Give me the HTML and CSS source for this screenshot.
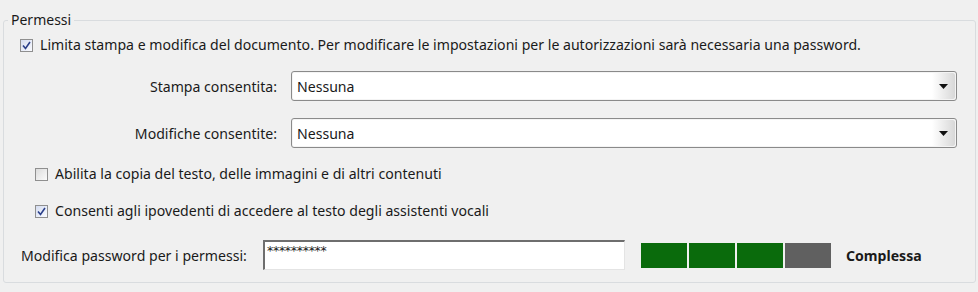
FILE: index.html
```html
<!DOCTYPE html>
<html lang="it">
<head>
<meta charset="utf-8">
<link rel="stylesheet" href="styles.css">
</head>
<body>
<fieldset class="group">
  <legend class="legend">Permessi</legend>
  <label class="check-row main-check">
    <span class="box checked"><svg viewBox="0 0 9 9" width="9" height="9"><path d="M1 4.5 L3.5 7.5 L8 1" fill="none" stroke="#2a3f8a" stroke-width="1.6"/></svg></span>
    <span>Limita stampa e modifica del documento. Per modificare le impostazioni per le autorizzazioni sarà necessaria una password.</span>
  </label>
  <div class="field-row first">
    <span class="field-label">Stampa consentita:</span>
    <div class="select"><span class="select-text">Nessuna</span><span class="arrow"><svg viewBox="0 0 9 5" width="9" height="5"><path d="M0 0 H9 L4.5 5 Z" fill="#111"/></svg></span></div>
  </div>
  <div class="field-row second">
    <span class="field-label">Modifiche consentite:</span>
    <div class="select"><span class="select-text">Nessuna</span><span class="arrow"><svg viewBox="0 0 9 5" width="9" height="5"><path d="M0 0 H9 L4.5 5 Z" fill="#111"/></svg></span></div>
  </div>
  <label class="check-row sub-check c1">
    <span class="box"></span>
    <span>Abilita la copia del testo, delle immagini e di altri contenuti</span>
  </label>
  <label class="check-row sub-check c2">
    <span class="box checked"><svg viewBox="0 0 9 9" width="9" height="9"><path d="M1 4.5 L3.5 7.5 L8 1" fill="none" stroke="#2a3f8a" stroke-width="1.6"/></svg></span>
    <span>Consenti agli ipovedenti di accedere al testo degli assistenti vocali</span>
  </label>
  <div class="pw-row">
    <span class="pw-label">Modifica password per i permessi:</span>
    <div class="pw-input">**********</div>
    <div class="meter">
      <span class="seg on"></span><span class="seg on"></span><span class="seg on"></span><span class="seg off"></span>
    </div>
    <span class="strength">Complessa</span>
  </div>
</fieldset>
</body>
</html>
```
FILE: styles.css
```css
html, body {
  margin: 0;
  padding: 0;
  background: #f0f0f0;
  width: 978px;
  height: 292px;
  overflow: hidden;
}
body {
  font-family: "Noto Sans", "Open Sans", sans-serif;
  font-size: 14.1px;
  color: #1a1a1a;
}
.group {
  margin: 12px 0 0 3px;
  width: 973px;
  height: 271px;
  box-sizing: border-box;
  border: 1px solid #d9dcdf;
  border-radius: 3px;
  padding: 0;
}
.legend {
  padding: 0 3px;
  margin-left: 4px;
  font-size: 14px;
  line-height: 16px;
}
.check-row {
  display: flex;
  align-items: center;
  gap: 7px;
  height: 16px;
  line-height: 16px;
  white-space: nowrap;
}
.main-check {
  margin: 9px 0 0 16px;
}
.box {
  width: 11px;
  height: 11px;
  border: 1px solid #8f8f8f;
  background: linear-gradient(135deg, #dcdcdc, #fbfbfb);
  display: flex;
  align-items: center;
  justify-content: center;
  flex: none;
}
.box.checked {
  background: linear-gradient(135deg, #d4dcf0, #fafbff);
}
.field-row {
  display: flex;
  align-items: center;
  height: 30px;
}
.field-row.first { margin-top: 18px; }
.field-row.second { margin-top: 17px; }
.field-label {
  width: 287px;
  text-align: right;
  padding-right: 14px;
  box-sizing: border-box;
}
.select {
  width: 666px;
  height: 30px;
  box-sizing: border-box;
  border: 1px solid #8a8a8a;
  border-radius: 3px;
  background: #fff;
  display: flex;
  align-items: center;
  box-shadow: inset 0 0 0 1px #f4f4f4;
}
.select-text {
  flex: 1;
  padding-left: 5px;
}
.arrow {
  width: 23px;
  height: 26px;
  margin-right: 1px;
  background: linear-gradient(90deg, #ffffff, #d8d8d8);
  display: flex;
  align-items: center;
  justify-content: center;
  border-radius: 0 2px 2px 0;
}
.sub-check { margin-left: 31px; }
.sub-check.c1 { margin-top: 18px; }
.sub-check.c2 { margin-top: 21px; }
.pw-row {
  display: flex;
  align-items: center;
  margin-top: 21px;
  height: 30px;
}
.pw-label {
  margin-left: 17px;
  width: 242px;
}
.pw-input {
  width: 362px;
  height: 30px;
  box-sizing: border-box;
  background: #fff;
  border-top: 2px solid #6e6e6e;
  border-left: 2px solid #6e6e6e;
  border-right: 1px solid #e4e4e4;
  border-bottom: 1px solid #e4e4e4;
  padding: 3px 0 0 2px;
  font-family: "DejaVu Sans", sans-serif;
  font-size: 12.5px;
  line-height: 12px;
  letter-spacing: -0.3px;
}
.meter {
  display: flex;
  gap: 2px;
  margin-left: 16px;
  height: 25px;
}
.seg {
  width: 46px;
  height: 25px;
}
.seg.on { background: #0a6b0c; }
.seg.off { background: #606060; }
.strength {
  margin-left: 15px;
  font-weight: bold;
}
```
